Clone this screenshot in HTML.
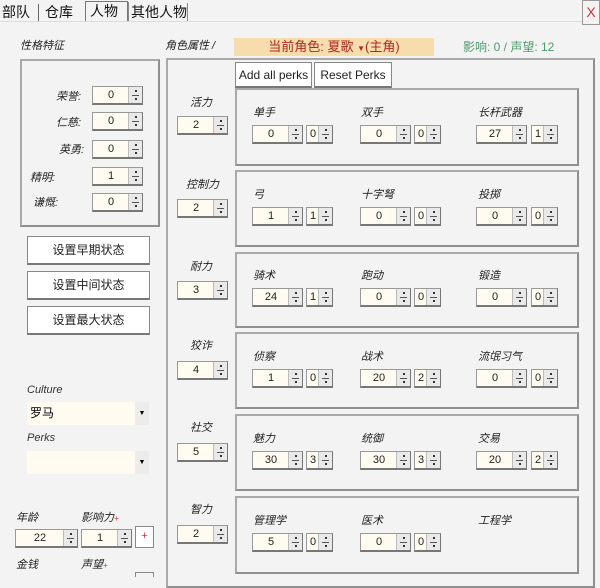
<!DOCTYPE html>
<html><head><meta charset="utf-8"><style>
*{box-sizing:border-box}
body{margin:0;width:600px;height:575px;overflow:hidden;background:#f3f3f3;font-family:"Liberation Sans","Noto Sans CJK SC",sans-serif;position:relative}
.a{position:absolute}
.lbl{position:absolute;font-size:11px;font-style:italic;color:#222;white-space:nowrap}
.box{position:absolute;border:2px solid #a9a9a9;border-right-color:#8f8f8f;border-bottom-color:#8f8f8f}
.sp{position:absolute;height:19px;background:#fffbf0;border:1px solid #999;border-right-color:#777;border-bottom:2px solid #777;font-size:11px;color:#222}
.sp .v{position:absolute;left:0;top:0;bottom:0;text-align:center;line-height:17px}
.sp .ar{position:absolute;right:0;top:0;bottom:0;width:14px;background:#e9e9e9;border-left:1px solid #bbb}
.sp .ar:before{content:"";position:absolute;left:3px;right:3px;top:8px;height:1px;background:#555}
.sp .ar:after{content:"";position:absolute;left:6px;top:3px;width:2px;height:2px;background:#333;box-shadow:0 8px 0 #333}
.btn{position:absolute;background:#fff;border:1px solid #888;border-bottom:2px solid #777;font-size:12px;text-align:center;color:#222}
.tab{position:absolute;top:2px;font-size:14px;color:#111}
</style></head><body>
<!-- tabs -->
<div class="tab" style="left:2px">部队</div>
<div class="a" style="left:38px;top:4px;width:1px;height:17px;background:#666"></div>
<div class="tab" style="left:45px">仓库</div>
<div class="a" style="left:85px;top:1px;width:43px;height:20px;border:1px solid #777;border-bottom:none"></div>
<div class="tab" style="left:90px;top:1px">人物</div>
<div class="a" style="left:128px;top:2px;width:1px;height:20px;background:#888"></div>
<div class="tab" style="left:131px">其他人物</div>
<div class="a" style="left:187px;top:3px;width:1px;height:18px;background:#888"></div>
<div class="a" style="left:0;top:21px;width:582px;height:1px;background:#ddd"></div>
<div class="a" style="left:582px;top:0;width:18px;height:25px;border:1px solid #999;background:#f3f3f3;color:#c33;font-size:14px;text-align:center;line-height:23px">X</div>

<!-- left -->
<div class="lbl" style="left:20px;top:37px">性格特征</div>
<div class="box" style="left:20px;top:59px;width:140px;height:168px"></div>
<div class="lbl" style="left:56px;top:88px">荣誉:</div>
<div class="sp" style="left:92px;top:86px;width:51px"><div class="v" style="width:36px">0</div><div class="ar"></div></div>
<div class="lbl" style="left:56px;top:114px">仁慈:</div>
<div class="sp" style="left:92px;top:112px;width:51px"><div class="v" style="width:36px">0</div><div class="ar"></div></div>
<div class="lbl" style="left:59px;top:141px">英勇:</div>
<div class="sp" style="left:92px;top:140px;width:51px"><div class="v" style="width:36px">0</div><div class="ar"></div></div>
<div class="lbl" style="left:30px;top:169px">精明:</div>
<div class="sp" style="left:92px;top:167px;width:51px"><div class="v" style="width:36px">1</div><div class="ar"></div></div>
<div class="lbl" style="left:33px;top:194px">谦慨:</div>
<div class="sp" style="left:92px;top:193px;width:51px"><div class="v" style="width:36px">0</div><div class="ar"></div></div>

<div class="btn" style="left:27px;top:236px;width:123px;height:29px;line-height:26px">设置早期状态</div>
<div class="btn" style="left:27px;top:271px;width:123px;height:29px;line-height:26px">设置中间状态</div>
<div class="btn" style="left:27px;top:306px;width:123px;height:29px;line-height:26px">设置最大状态</div>

<div class="lbl" style="left:27px;top:384px;color:#333">Culture</div>
<div class="a" style="left:27px;top:402px;width:122px;height:23px;background:#fffbf0;font-size:12px;line-height:23px;padding-left:3px">罗马</div>
<div class="a" style="left:135px;top:402px;width:14px;height:23px;background:#ececec;font-size:7px;text-align:center;line-height:23px">▼</div>
<div class="lbl" style="left:27px;top:432px;color:#333">Perks</div>
<div class="a" style="left:27px;top:451px;width:122px;height:23px;background:#fffbf0"></div>
<div class="a" style="left:135px;top:451px;width:14px;height:23px;background:#ececec;font-size:7px;text-align:center;line-height:23px">▼</div>

<div class="lbl" style="left:16px;top:509px">年龄</div>
<div class="lbl" style="left:81px;top:509px">影响力<span style="color:#c33;font-size:8px">+</span></div>
<div class="sp" style="left:15px;top:529px;width:63px"><div class="v" style="width:48px">22</div><div class="ar"></div></div>
<div class="sp" style="left:81px;top:529px;width:51px"><div class="v" style="width:36px">1</div><div class="ar"></div></div>
<div class="a" style="left:135px;top:526px;width:19px;height:22px;border:1px solid #888;background:#fff;color:#c33;font-size:11px;text-align:center;line-height:19px">+</div>
<div class="lbl" style="left:16px;top:556px">金钱</div>
<div class="lbl" style="left:81px;top:556px">声望<span style="color:#c33;font-size:8px">+</span></div>
<div class="a" style="left:135px;top:572px;width:19px;height:5px;border:1px solid #888;border-bottom:none"></div>

<!-- right header -->
<div class="lbl" style="left:165px;top:37px">角色属性 /</div>
<div class="a" style="left:234px;top:38px;width:200px;height:18px;background:#f7dcae;color:#b0281e;font-size:13px;text-align:center;line-height:18px">当前角色: 夏歌 <span style="font-size:8px">▼</span>(主角)</div>
<div class="a" style="left:463px;top:38px;font-size:12px;color:#4f9a6c">影响: 0 / 声望: 12</div>

<div class="box" style="left:166px;top:58px;width:429px;height:530px"></div>
<div class="btn" style="left:235px;top:62px;width:77px;height:26px;line-height:24px">Add all perks</div>
<div class="btn" style="left:314px;top:62px;width:78px;height:26px;line-height:24px">Reset Perks</div>

<!-- attrs -->
<div class="lbl" style="left:190px;top:94px">活力</div>
<div class="sp" style="left:177px;top:116px;width:51px"><div class="v" style="width:36px">2</div><div class="ar"></div></div>
<div class="lbl" style="left:186px;top:176px">控制力</div>
<div class="sp" style="left:177px;top:199px;width:51px"><div class="v" style="width:36px">2</div><div class="ar"></div></div>
<div class="lbl" style="left:190px;top:258px">耐力</div>
<div class="sp" style="left:177px;top:281px;width:51px"><div class="v" style="width:36px">3</div><div class="ar"></div></div>
<div class="lbl" style="left:190px;top:337px">狡诈</div>
<div class="sp" style="left:177px;top:361px;width:51px"><div class="v" style="width:36px">4</div><div class="ar"></div></div>
<div class="lbl" style="left:190px;top:419px">社交</div>
<div class="sp" style="left:177px;top:443px;width:51px"><div class="v" style="width:36px">5</div><div class="ar"></div></div>
<div class="lbl" style="left:190px;top:501px">智力</div>
<div class="sp" style="left:177px;top:525px;width:51px"><div class="v" style="width:36px">2</div><div class="ar"></div></div>

<!-- skill boxes -->
<div class="box" style="left:235px;top:88px;width:344px;height:78px"></div>
<div class="lbl" style="left:253px;top:104px">单手</div>
<div class="lbl" style="left:361px;top:104px">双手</div>
<div class="lbl" style="left:478px;top:104px">长杆武器</div>
<div class="sp" style="left:252px;top:125px;width:51px"><div class="v" style="width:36px">0</div><div class="ar"></div></div>
<div class="sp" style="left:306px;top:125px;width:27px"><div class="v" style="width:12px">0</div><div class="ar"></div></div>
<div class="sp" style="left:360px;top:125px;width:51px"><div class="v" style="width:36px">0</div><div class="ar"></div></div>
<div class="sp" style="left:414px;top:125px;width:27px"><div class="v" style="width:12px">0</div><div class="ar"></div></div>
<div class="sp" style="left:476px;top:125px;width:51px"><div class="v" style="width:36px">27</div><div class="ar"></div></div>
<div class="sp" style="left:531px;top:125px;width:27px"><div class="v" style="width:12px">1</div><div class="ar"></div></div>

<div class="box" style="left:235px;top:170px;width:344px;height:77px"></div>
<div class="lbl" style="left:253px;top:186px">弓</div>
<div class="lbl" style="left:361px;top:186px">十字弩</div>
<div class="lbl" style="left:478px;top:186px">投掷</div>
<div class="sp" style="left:252px;top:207px;width:51px"><div class="v" style="width:36px">1</div><div class="ar"></div></div>
<div class="sp" style="left:306px;top:207px;width:27px"><div class="v" style="width:12px">1</div><div class="ar"></div></div>
<div class="sp" style="left:360px;top:207px;width:51px"><div class="v" style="width:36px">0</div><div class="ar"></div></div>
<div class="sp" style="left:414px;top:207px;width:27px"><div class="v" style="width:12px">0</div><div class="ar"></div></div>
<div class="sp" style="left:476px;top:207px;width:51px"><div class="v" style="width:36px">0</div><div class="ar"></div></div>
<div class="sp" style="left:531px;top:207px;width:27px"><div class="v" style="width:12px">0</div><div class="ar"></div></div>

<div class="box" style="left:235px;top:252px;width:344px;height:76px"></div>
<div class="lbl" style="left:253px;top:267px">骑术</div>
<div class="lbl" style="left:361px;top:267px">跑动</div>
<div class="lbl" style="left:478px;top:267px">锻造</div>
<div class="sp" style="left:252px;top:288px;width:51px"><div class="v" style="width:36px">24</div><div class="ar"></div></div>
<div class="sp" style="left:306px;top:288px;width:27px"><div class="v" style="width:12px">1</div><div class="ar"></div></div>
<div class="sp" style="left:360px;top:288px;width:51px"><div class="v" style="width:36px">0</div><div class="ar"></div></div>
<div class="sp" style="left:414px;top:288px;width:27px"><div class="v" style="width:12px">0</div><div class="ar"></div></div>
<div class="sp" style="left:476px;top:288px;width:51px"><div class="v" style="width:36px">0</div><div class="ar"></div></div>
<div class="sp" style="left:531px;top:288px;width:27px"><div class="v" style="width:12px">0</div><div class="ar"></div></div>

<div class="box" style="left:235px;top:332px;width:344px;height:77px"></div>
<div class="lbl" style="left:253px;top:348px">侦察</div>
<div class="lbl" style="left:361px;top:348px">战术</div>
<div class="lbl" style="left:478px;top:348px">流氓习气</div>
<div class="sp" style="left:252px;top:369px;width:51px"><div class="v" style="width:36px">1</div><div class="ar"></div></div>
<div class="sp" style="left:306px;top:369px;width:27px"><div class="v" style="width:12px">0</div><div class="ar"></div></div>
<div class="sp" style="left:360px;top:369px;width:51px"><div class="v" style="width:36px">20</div><div class="ar"></div></div>
<div class="sp" style="left:414px;top:369px;width:27px"><div class="v" style="width:12px">2</div><div class="ar"></div></div>
<div class="sp" style="left:476px;top:369px;width:51px"><div class="v" style="width:36px">0</div><div class="ar"></div></div>
<div class="sp" style="left:531px;top:369px;width:27px"><div class="v" style="width:12px">0</div><div class="ar"></div></div>

<div class="box" style="left:235px;top:414px;width:344px;height:77px"></div>
<div class="lbl" style="left:253px;top:430px">魅力</div>
<div class="lbl" style="left:361px;top:430px">统御</div>
<div class="lbl" style="left:478px;top:430px">交易</div>
<div class="sp" style="left:252px;top:451px;width:51px"><div class="v" style="width:36px">30</div><div class="ar"></div></div>
<div class="sp" style="left:306px;top:451px;width:27px"><div class="v" style="width:12px">3</div><div class="ar"></div></div>
<div class="sp" style="left:360px;top:451px;width:51px"><div class="v" style="width:36px">30</div><div class="ar"></div></div>
<div class="sp" style="left:414px;top:451px;width:27px"><div class="v" style="width:12px">3</div><div class="ar"></div></div>
<div class="sp" style="left:476px;top:451px;width:51px"><div class="v" style="width:36px">20</div><div class="ar"></div></div>
<div class="sp" style="left:531px;top:451px;width:27px"><div class="v" style="width:12px">2</div><div class="ar"></div></div>

<div class="box" style="left:235px;top:496px;width:344px;height:78px"></div>
<div class="lbl" style="left:253px;top:512px">管理学</div>
<div class="lbl" style="left:361px;top:512px">医术</div>
<div class="lbl" style="left:478px;top:512px">工程学</div>
<div class="sp" style="left:252px;top:533px;width:51px"><div class="v" style="width:36px">5</div><div class="ar"></div></div>
<div class="sp" style="left:306px;top:533px;width:27px"><div class="v" style="width:12px">0</div><div class="ar"></div></div>
<div class="sp" style="left:360px;top:533px;width:51px"><div class="v" style="width:36px">0</div><div class="ar"></div></div>
<div class="sp" style="left:414px;top:533px;width:27px"><div class="v" style="width:12px">0</div><div class="ar"></div></div>
</body></html>
